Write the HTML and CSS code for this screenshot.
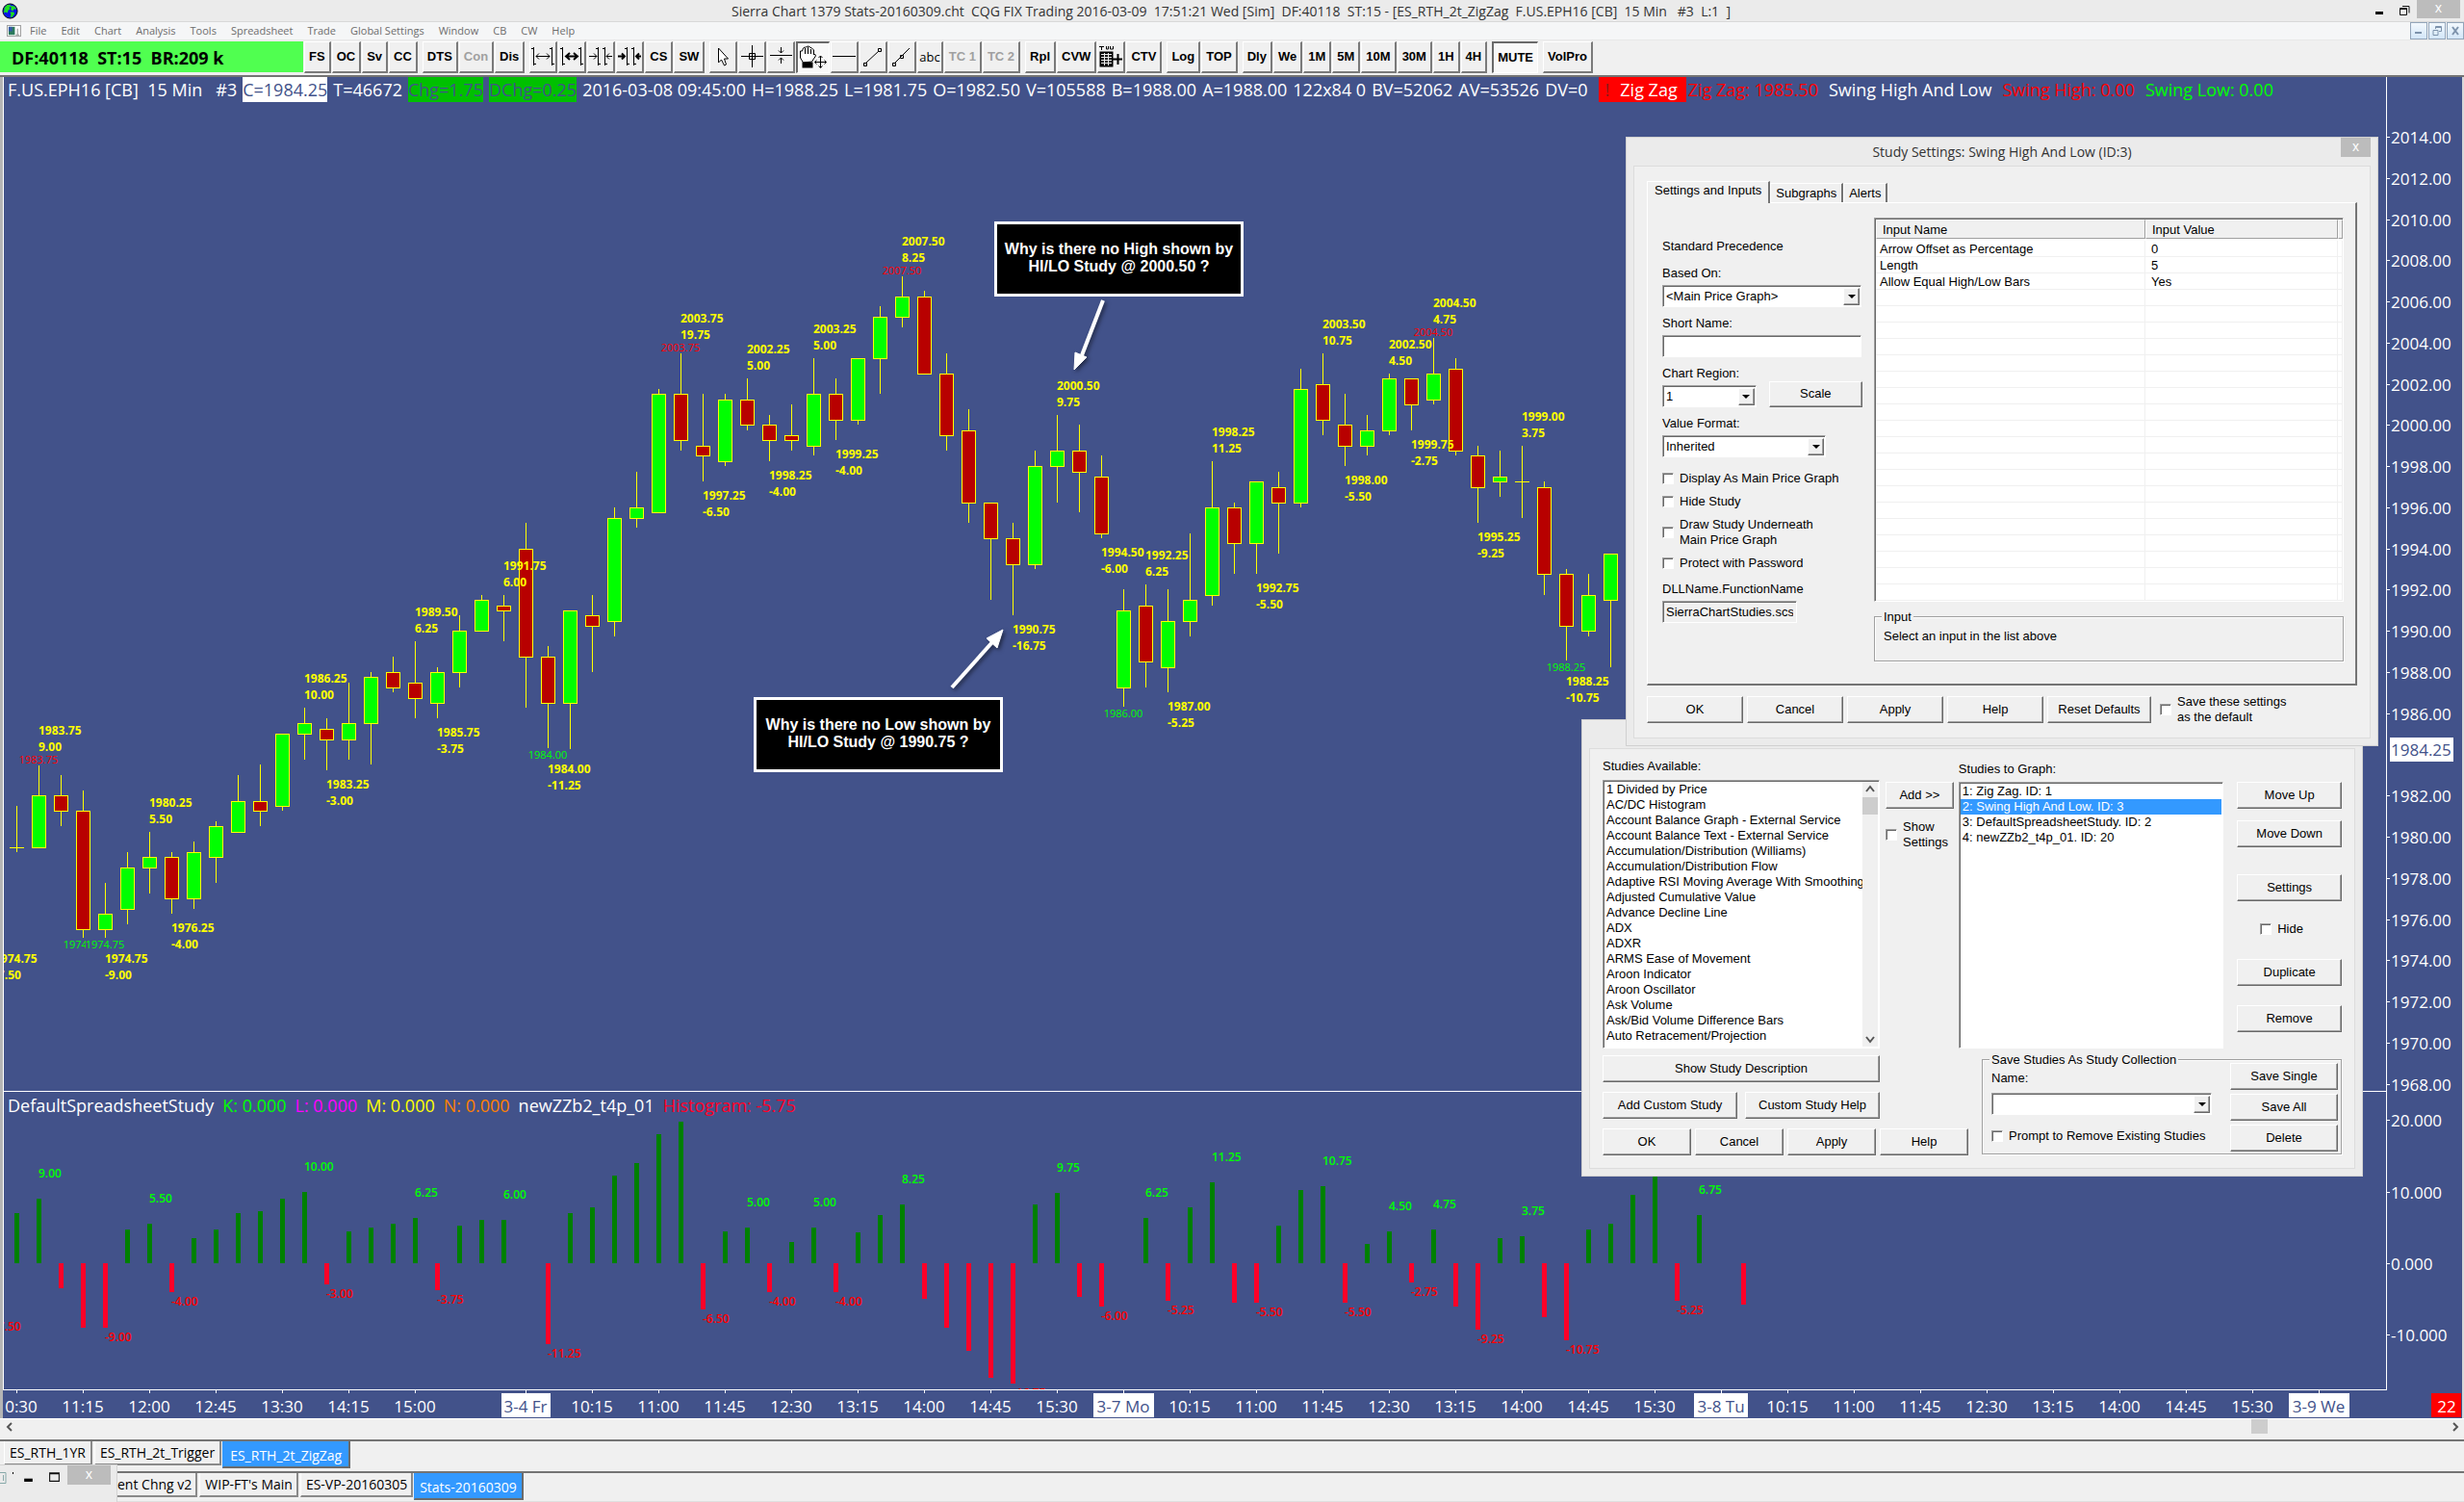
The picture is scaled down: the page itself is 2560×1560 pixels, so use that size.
FILE: index.html
```html
<!DOCTYPE html>
<html lang="en">
<head>
<meta charset="utf-8">
<title>Sierra Chart 1379 Stats-20160309.cht</title>
<link rel="stylesheet" href="styles.css">
</head>
<body>
<header class="titlebar">
  <svg class="globe" viewBox="0 0 18 18" aria-hidden="true"><circle cx="9" cy="9" r="8" fill="#0a14e6" stroke="#000" stroke-width="1"/><path d="M3 5l3-3 3 0 1 2-2 1 1 2-2 1-1 3-2-1-2 1zM10 3l4 1 2 3-3 0-1 2-2-1zM9 10l4 0 1 2-3 4-2-1 1-2z" fill="#1ee01e"/></svg>
  <h1 class="app-title">Sierra Chart 1379 Stats-20160309.cht  CQG FIX Trading 2016-03-09  17:51:21 Wed [Sim]  DF:40118  ST:15 - [ES_RTH_2t_ZigZag  F.US.EPH16 [CB]  15 Min   #3  L:1  ]</h1>
  <div class="window-buttons">
    <button type="button" class="caption-btn" aria-label="Minimize"><svg viewBox="0 0 12 12"><rect x="2" y="8" width="8" height="3"/></svg></button>
    <button type="button" class="caption-btn" aria-label="Restore"><svg viewBox="0 0 12 12"><path d="M1.500 4.500h7v7h-7zM1 5.500h8M4 2.500h7v7" fill="none" stroke="#111"/></svg></button>
    <button type="button" class="close-btn" aria-label="Close">x</button>
  </div>
</header>

<nav class="menubar">
  <svg class="doc-icon" viewBox="0 0 16 14" aria-hidden="true"><rect x=".5" y=".5" width="15" height="12" fill="#fff" stroke="#9a9a9a"/><rect x="2" y="2" width="7" height="9" fill="#2c7a5c"/><rect x="2" y="2" width="4" height="5" fill="#3558a8"/><path d="M10 11h4M12 4v7" stroke="#888"/></svg>
  <button type="button">File</button><button type="button">Edit</button><button type="button">Chart</button><button type="button">Analysis</button><button type="button">Tools</button><button type="button">Spreadsheet</button><button type="button">Trade</button><button type="button">Global Settings</button><button type="button">Window</button><button type="button">CB</button><button type="button">CW</button><button type="button">Help</button>
  <div class="mdi-buttons">
    <button type="button" aria-label="Minimize chart"><svg viewBox="0 0 12 12"><rect x="2" y="7" width="7" height="2" fill="#7d93ac"/></svg></button>
    <button type="button" aria-label="Restore chart"><svg viewBox="0 0 12 12"><path d="M2 5.500h5v5h-5zM4.500 4V1.500h6v5H8M4 2.500h6" fill="none" stroke="#7d93ac"/></svg></button>
    <button type="button" aria-label="Close chart"><svg viewBox="0 0 12 12"><path d="M3 2l6 8M9 2l-6 8" stroke="#7d93ac" stroke-width="2"/></svg></button>
  </div>
</nav>

<div class="toolbar">
  <output class="status">DF:40118  ST:15  BR:209 k</output>
  <div class="group"><button type="button">FS</button><button type="button">OC</button><button type="button">Sv</button><button type="button">CC</button></div>
  <div class="group"><button type="button">DTS</button><button type="button" disabled>Con</button><button type="button">Dis</button></div>
  <div class="group">
    <button type="button" class="ico" aria-label="Increase bar spacing"><svg viewBox="0 0 26 26"><path d="M3.500 3v19M1 4.500h2M4 20.500h2M22.500 3v19M20 4.500h2M23 20.500h2M6 12.500h14M9 9.500l-3 3 3 3M17 9.500l3 3-3 3"/></svg></button>
    <button type="button" class="ico" aria-label="Increase spacing faster"><svg viewBox="0 0 26 26"><path d="M3.500 3v19M1 4.500h2M4 20.500h2M22.500 3v19M20 4.500h2M23 20.500h2"/><path d="M7 12.500h12M11 9l-4 3.500 4 3.500M15 9l4 3.500-4 3.500" stroke-width="2"/></svg></button>
    <button type="button" class="ico" aria-label="Decrease bar spacing"><svg viewBox="0 0 26 26"><path d="M10.500 3v19M8 4.500h2M11 20.500h2M17.500 3v19M15 4.500h2M18 20.500h2M1 12.500h8M6 9.500l3 3-3 3M25 12.500h-6M22 9.500l-3 3 3 3"/></svg></button>
    <button type="button" class="ico" aria-label="Decrease spacing faster"><svg viewBox="0 0 26 26"><path d="M10.500 3v19M8 4.500h2M11 20.500h2M17.500 3v19M15 4.500h2M18 20.500h2"/><path d="M1 12.500h7M5 9.500l3 3-3 3M25 12.500h-5M23 9.500l-3 3 3 3" stroke-width="2"/></svg></button>
    <button type="button">CS</button><button type="button">SW</button>
  </div>
  <div class="group">
    <button type="button" class="ico" aria-label="Pointer"><svg viewBox="0 0 26 26"><path d="M8.500 4v15l3-3 3 6 2-1-2-6h4z" fill="#fff"/></svg></button>
    <button type="button" class="ico" aria-label="Crosshair"><svg viewBox="0 0 26 26"><path d="M13.500 1v23M2 12.500h23M10.500 9.500h6v6h-6z"/></svg></button>
    <button type="button" class="ico" aria-label="Vertical scale"><svg viewBox="0 0 26 26"><path d="M2 11.500h23M13.500 3v6M11 6.500l2.500 2.500 2.500-2.500M13.500 20v-6M11 16.500l2.500-2.500 2.500 2.500"/></svg></button>
    <button type="button" class="ico wide pressed" aria-label="Hand"><svg viewBox="0 0 30 26"><path d="M5.500 18l-3-5 0-7 2 0 1-3 2-1 1 0 2-1 2 1 2 1 2 2v5l1-1 1 2-4 6z" fill="#fff"/><path d="M7.500 9V3M10.500 9V2M13.500 9V4"/><rect x="5" y="18" width="10" height="5" fill="#000"/><path d="M23.500 11v12M17.500 17.500h12M21.500 13l2-2 2 2M21.500 21.500l2 2 2-2M19.500 15.500l-2 2 2 2M27.500 15.500l2 2-2 2"/></svg></button>
    <button type="button" class="ico" aria-label="Horizontal line"><svg viewBox="0 0 26 26"><path d="M1 12.500h24"/></svg></button>
    <button type="button" class="ico" aria-label="Line"><svg viewBox="0 0 26 26"><path d="M6 19L19 7M3.500 19.500h3v3h-3zM18.500 4.500h3v3h-3z"/></svg></button>
    <button type="button" class="ico" aria-label="Ray"><svg viewBox="0 0 26 26"><path d="M6 19L21 4M3.500 19.500h3v3h-3zM11.500 11.500h3v3h-3z"/></svg></button>
    <button type="button" class="plain">abc</button><button type="button" disabled>TC 1</button><button type="button" disabled>TC 2</button>
  </div>
  <div class="group"><button type="button">Rpl</button><button type="button">CVW</button><button type="button" class="ico" aria-label="Trade window"><svg viewBox="0 0 26 26"><path d="M1 2.500h5M3.500 2v4M8.500 2v3l2 0 0-3M12.500 2v3h3v-3"/><rect x="2" y="8" width="13" height="15" fill="#000"/><path d="M3 10.500h11M3 13.500h11M3 16.500h11M3 19.500h11M6.500 9v13M10.500 9v13" stroke="#eee"/><path d="M14 15.500h11M20.500 10v11" stroke-width="2"/></svg></button><button type="button">CTV</button></div>
  <div class="group"><button type="button">Log</button><button type="button">TOP</button></div>
  <div class="group"><button type="button">Dly</button><button type="button">We</button><button type="button">1M</button><button type="button">5M</button><button type="button">10M</button><button type="button">30M</button><button type="button">1H</button><button type="button">4H</button></div>
  <div class="group"><button type="button" class="pressed">MUTE</button></div>
  <div class="group"><button type="button">VolPro</button></div>
</div>

<main class="workspace">
  <svg class="chart" id="chart" role="img" aria-label="F.US.EPH16 15 minute candlestick chart"></svg>

  <div class="legend">
    <span>F.US.EPH16 [CB]  15 Min   #3</span>
    <span class="last">C=1984.25</span>
    <span>T=46672</span>
    <span class="change">Chg=1.75</span>
    <span class="change">DChg=0.25</span>
    <span>2016-03-08 09:45:00</span>
    <span>H=1988.25</span>
    <span>L=1981.75</span>
    <span>O=1982.50</span>
    <span>V=105588</span>
    <span>B=1988.00</span>
    <span>A=1988.00</span>
    <span>122x84 0</span>
    <span>BV=52062</span>
    <span>AV=53526</span>
    <span>DV=0</span>
    <span class="alert"><i>!</i>Zig Zag</span>
    <span class="red after-alert">Zig Zag: 1985.50</span>
    <span class="study">Swing High And Low</span>
    <span class="red study">Swing High: 0.00</span>
    <span class="green study">Swing Low: 0.00</span>
  </div>

  <div class="legend lower" id="studyLegend">
    <span>DefaultSpreadsheetStudy</span>
    <span class="green study">K: 0.000</span>
    <span class="magenta study">L: 0.000</span>
    <span class="yellow study">M: 0.000</span>
    <span class="orange study">N: 0.000</span>
    <span class="study">newZZb2_t4p_01</span>
    <span class="crimson study">Histogram: -5.75</span>
  </div>

  <p class="note note-high">Why is there no High shown by<br>HI/LO Study @ 2000.50 ?</p>
  <p class="note note-low">Why is there no Low shown by<br>HI/LO Study @ 1990.75 ?</p>

  <section class="dialog studies" aria-label="Chart Studies">
    <div class="dialog-title"></div>
    <form class="dialog-body studies-body">
      <div class="studies-top">
        <div class="available">
          <span class="text" id="availLabel">Studies Available:</span>
          <div class="listbox">
            <ul role="listbox" aria-labelledby="availLabel">
              <li>1 Divided by Price</li><li>AC/DC Histogram</li><li>Account Balance Graph - External Service</li><li>Account Balance Text - External Service</li><li>Accumulation/Distribution (Williams)</li><li>Accumulation/Distribution Flow</li><li>Adaptive RSI Moving Average With Smoothing</li><li>Adjusted Cumulative Value</li><li>Advance Decline Line</li><li>ADX</li><li>ADXR</li><li>ARMS Ease of Movement</li><li>Aroon Indicator</li><li>Aroon Oscillator</li><li>Ask Volume</li><li>Ask/Bid Volume Difference Bars</li><li>Auto Retracement/Projection</li><li>Awesome Oscillator</li>
            </ul>
            <div class="vscroll">
              <svg viewBox="0 0 16 16"><path d="M4 10l4-5 4 5"/></svg>
              <span class="thumb"></span>
              <svg class="down" viewBox="0 0 16 16"><path d="M4 6l4 5 4-5"/></svg>
            </div>
          </div>
        </div>
        <div class="add-col">
          <button type="button" class="btn">Add &gt;&gt;</button>
          <label class="check"><input type="checkbox"><span>Show<br>Settings</span></label>
        </div>
        <div class="graphed">
          <span class="text" id="graphLabel">Studies to Graph:</span>
          <div class="listbox">
            <ul role="listbox" aria-labelledby="graphLabel">
              <li>1: Zig Zag. ID: 1</li><li class="selected" aria-selected="true">2: Swing High And Low. ID: 3</li><li>3: DefaultSpreadsheetStudy. ID: 2</li><li>4: newZZb2_t4p_01. ID: 20</li>
            </ul>
          </div>
        </div>
        <div class="actions">
          <button type="button" class="btn">Move Up</button>
          <button type="button" class="btn">Move Down</button>
          <button type="button" class="btn spaced">Settings</button>
          <label class="check hide"><input type="checkbox"><span>Hide</span></label>
          <button type="button" class="btn">Duplicate</button>
          <button type="button" class="btn remove">Remove</button>
        </div>
      </div>
      <div class="studies-bottom">
        <div class="left-buttons">
          <div class="btn-row wide"><button type="button" class="btn">Show Study Description</button></div>
          <div class="btn-row wide"><button type="button" class="btn">Add Custom Study</button><button type="button" class="btn">Custom Study Help</button></div>
          <div class="btn-row small"><button type="button" class="btn">OK</button><button type="button" class="btn">Cancel</button><button type="button" class="btn">Apply</button><button type="button" class="btn">Help</button></div>
        </div>
        <fieldset class="groupbox collection">
          <legend>Save Studies As Study Collection</legend>
          <div class="collection-form">
            <label class="text" for="collName">Name:</label>
            <span class="combo"><select id="collName"><option></option></select><span class="combo-arrow"></span></span>
            <label class="check"><input type="checkbox"><span>Prompt to Remove Existing Studies</span></label>
          </div>
          <div class="collection-buttons">
            <button type="button" class="btn">Save Single</button><button type="button" class="btn">Save All</button><button type="button" class="btn">Delete</button>
          </div>
        </fieldset>
      </div>
    </form>
  </section>

  <section class="dialog settings" aria-labelledby="settingsTitle">
    <div class="dialog-title"><h2 id="settingsTitle">Study Settings: Swing High And Low (ID:3)</h2><button type="button" class="close-btn" aria-label="Close dialog">x</button></div>
    <form class="dialog-body">
      <div class="tabs" role="tablist"><button type="button" role="tab" class="active" aria-selected="true">Settings and Inputs</button><button type="button" role="tab">Subgraphs</button><button type="button" role="tab">Alerts</button></div>
      <div class="tab-panel">
        <div class="fields">
          <span class="text precedence">Standard Precedence</span>
          <label class="text" for="basedOn">Based On:</label>
          <span class="combo"><select id="basedOn"><option>&lt;Main Price Graph&gt;</option></select><span class="combo-arrow"></span></span>
          <label class="text" for="shortName">Short Name:</label>
          <input type="text" class="edit" id="shortName">
          <label class="text" for="region">Chart Region:</label>
          <div class="region-row"><span class="combo"><select id="region"><option>1</option></select><span class="combo-arrow"></span></span><button type="button" class="btn">Scale</button></div>
          <label class="text" for="format">Value Format:</label>
          <span class="combo format"><select id="format"><option>Inherited</option></select><span class="combo-arrow"></span></span>
          <div class="checks">
            <label class="check"><input type="checkbox"><span>Display As Main Price Graph</span></label>
            <label class="check"><input type="checkbox"><span>Hide Study</span></label>
            <label class="check"><input type="checkbox"><span>Draw Study Underneath<br>Main Price Graph</span></label>
            <label class="check"><input type="checkbox"><span>Protect with Password</span></label>
          </div>
          <label class="text dll" for="dll">DLLName.FunctionName</label>
          <input type="text" class="edit readonly" id="dll" value="SierraChartStudies.scsf_SwingHighAndLow" readonly>
        </div>
        <div class="inputs">
          <div class="grid-box">
            <table class="input-grid">
              <colgroup><col class="c-name"><col class="c-value"><col class="c-rest"></colgroup>
              <thead><tr><th>Input Name</th><th>Input Value</th><th></th></tr></thead>
              <tbody id="inputRows">
                <tr><td>Arrow Offset as Percentage</td><td>0</td><td></td></tr>
                <tr><td>Length</td><td>5</td><td></td></tr>
                <tr><td>Allow Equal High/Low Bars</td><td>Yes</td><td></td></tr>
              </tbody>
            </table>
          </div>
          <fieldset class="groupbox hint"><legend>Input</legend><p>Select an input in the list above</p></fieldset>
        </div>
      </div>
      <div class="btn-row dialog-buttons">
        <button type="button" class="btn">OK</button><button type="button" class="btn">Cancel</button><button type="button" class="btn">Apply</button><button type="button" class="btn">Help</button><button type="button" class="btn reset">Reset Defaults</button>
        <label class="check"><input type="checkbox"><span>Save these settings<br>as the default</span></label>
      </div>
    </form>
  </section>
</main>

<div class="hscroll">
  <svg viewBox="0 0 8 12"><path d="M6 2L2 6l4 4"/></svg>
  <span class="thumb"></span>
  <svg viewBox="0 0 8 12"><path d="M2 2l4 4-4 4"/></svg>
</div>
<nav class="sheet-tabs charts" aria-label="Charts"><button type="button">ES_RTH_1YR</button><button type="button">ES_RTH_2t_Trigger</button><button type="button" class="active">ES_RTH_2t_ZigZag</button></nav>
<nav class="sheet-tabs books" aria-label="Chartbooks"><button type="button">ent Chng v2</button><button type="button">WIP-FT's Main</button><button type="button">ES-VP-20160305</button><button type="button" class="active">Stats-20160309</button>
  <div class="mini-window">
    <svg class="mini-icon" viewBox="0 0 16 14" aria-hidden="true"><path d="M0 1.500h6v11H0M3.500 4v6" fill="none" stroke="#8aa"/><rect x="13" y="1" width="1" height="2"/></svg>
    <button type="button" class="caption-btn" aria-label="Minimize window"><svg viewBox="0 0 12 12"><rect x="2" y="8" width="8" height="3"/></svg></button>
    <button type="button" class="caption-btn" aria-label="Maximize window"><svg viewBox="0 0 12 12"><path d="M1.500 2v8.500h9V2M1 2.500h10M1 3.500h10" fill="none" stroke="#111"/></svg></button>
    <button type="button" class="close-btn" aria-label="Close window">x</button>
  </div>
</nav>
<script src="chart.js"></script>
</body>
</html>
```
FILE: styles.css
```css
* { box-sizing: border-box; }
:root {
  --ui: "Open Sans", "Noto Sans", sans-serif;
  --dlg: "Liberation Sans", Arial, sans-serif;
  --chart: #42528a;
  --face: #f0f0f0;
  --blue: #3399ff;
}
body {
  margin: 0;
  min-height: 100vh;
  display: flex;
  flex-direction: column;
  background: var(--face);
  font-family: var(--ui);
  color: #000;
  overflow: hidden;
}
h1, h2, p, ul, fieldset { margin: 0; padding: 0; }
button, input, select { font: inherit; color: inherit; margin: 0; }
svg { display: block; }

/* title bar and menu */
.titlebar {
  height: 23px;
  display: grid;
  grid-template-columns: 1fr auto 1fr;
  align-items: center;
  background: #ebebeb;
  border-bottom: 1px solid #d8d8d8;
  padding: 0 4px 0 2px;
}
.globe { width: 17px; height: 17px; }
.app-title {
  font-size: 14px;
  font-weight: 400;
  color: #333;
  white-space: pre;
}
.window-buttons { display: flex; align-self: start; justify-self: end; }
.caption-btn {
  width: 26px;
  height: 19px;
  padding: 3px 7px;
  border: 0;
  background: none;
}
.close-btn {
  width: 45px;
  height: 19px;
  padding: 0 0 3px;
  border: 0;
  background: #bcbcbc;
  color: #fff;
  font-size: 14px;
  line-height: 16px;
}
.menubar {
  height: 19px;
  display: flex;
  align-items: center;
  gap: 15px;
  padding-left: 7px;
  background: #f5f6f7;
  border-bottom: 1px solid #e8e8e8;
}
.menubar button {
  border: 0;
  padding: 0;
  background: none;
  color: #6d6d6d;
  font-size: 11px;
  line-height: 16px;
}
.doc-icon { width: 15px; height: 13px; margin-right: -6px; }
.mdi-buttons { display: flex; gap: 1px; margin-left: auto; }
.menubar .mdi-buttons button {
  width: 18px;
  height: 18px;
  padding: 2px;
  border: 1px solid #93a5ba;
  background: linear-gradient(#f2f8fd, #d3e6f8);
}

/* toolbar */
.toolbar {
  height: 38px;
  display: flex;
  align-items: flex-start;
  gap: 5px;
  padding-top: 1px;
  border-bottom: 2px solid #747474;
  background: var(--face);
}
.status {
  width: 315px;
  height: 32px;
  margin-right: -4px;
  padding-left: 12px;
  background: #50ff50;
  font-size: 18px;
  font-weight: 700;
  line-height: 34px;
  white-space: pre;
}
.group { display: flex; gap: 1px; }
.toolbar button {
  height: 33px;
  padding: 0 4px;
  border: solid;
  border-width: 1px 2px 2px 1px;
  border-color: #fff #7a7a7a #7a7a7a #fff;
  background: var(--face);
  font: 700 13px/28px var(--dlg);
}
.toolbar button:disabled { color: #a0a0a0; }
.toolbar .plain { font: 400 13px/28px var(--ui); padding: 0 1px; }
.toolbar .pressed {
  border-width: 2px 1px 1px 2px;
  border-color: #696969 #fff #fff #696969;
  background: #f8f8f8;
}
.toolbar .ico { width: 29px; padding: 0; }
.toolbar .wide { width: 35px; }
.ico svg { width: 26px; height: 26px; fill: none; stroke: #000; }
.wide svg { width: 30px; }

/* chart */
.workspace {
  flex: 1;
  position: relative;
  background: var(--chart);
  border-left: 3px solid #b5b5b5;
  overflow: hidden;
}
.chart { position: absolute; inset: 0; width: 100%; height: 100%; }
.chart text { font-family: var(--ui); }
.chart .axis-text { font-size: 17px; fill: #fff; }
.chart .day-text { font-size: 17px; fill: var(--chart); }
.chart .swing { font-size: 12px; font-weight: 700; fill: #ff0; }
.chart .bar-up { font-size: 12px; font-weight: 600; fill: #0f0; }
.chart .bar-down { font-size: 12px; font-weight: 600; fill: #f00; }
.chart .mark-high { font-size: 11px; fill: #f00; }
.chart .mark-low { font-size: 11px; fill: #0f0; }
.legend {
  position: absolute;
  top: 0;
  left: 5px;
  display: flex;
  color: #fff;
  font-size: 18px;
  line-height: 26px;
  white-space: pre;
  gap: 6px;
}
.legend.lower { gap: 4px; }
.legend .last { background: #fff; color: var(--chart); }
.legend .change { background: #00c000; color: var(--chart); }
.legend .alert { background: #f00; padding: 0 9px 0 7px; margin-left: 5px; }
.legend .alert i { font-style: normal; color: #8a1a1a; margin-right: 11px; }
.legend .after-alert { margin-left: -4px; }
.legend .study { margin-left: 5px; }
.red { color: #f00; }
.green { color: #0f0; }
.magenta { color: #f0f; }
.yellow { color: #ff0; }
.orange { color: #ff8000; }
.crimson { color: #ff0028; }

.note {
  position: absolute;
  width: 259px;
  padding: 17px 0 19px;
  border: 3px solid #fff;
  background: #000;
  color: #fff;
  text-align: center;
  font: 700 16px/18px var(--dlg);
  white-space: nowrap;
}
.note-high { left: 1030px; top: 150px; }
.note-low { left: 780px; top: 644px; }

/* dialogs */
.dialog {
  position: absolute;
  padding: 0 7px 7px;
  border: 1px solid #d0d0d0;
  background: #ebebeb;
  font: 13px/16px var(--dlg);
}
.settings { top: 62px; right: 89px; width: 782px; }
.studies { top: 667px; right: 105px; width: 812px; }
.dialog-title { height: 29px; position: relative; }
.dialog-title h2 {
  font: 400 14px/30px var(--ui);
  color: #333;
  text-align: center;
}
.dialog-title .close-btn {
  position: absolute;
  top: 0;
  right: 0;
  width: 31px;
  height: 20px;
}
.dialog-body {
  padding: 15px 13px 13px;
  border: 1px solid #dcdcdc;
  background: var(--face);
}
.text { display: block; }
.btn {
  height: 28px;
  padding: 0 0 1px;
  border: 1px solid;
  border-color: #fff #696969 #696969 #fff;
  box-shadow: inset -1px -1px #a0a0a0;
  background: var(--face);
}
.btn-row { display: flex; }
.check { display: flex; align-items: center; gap: 6px; }
.check input {
  appearance: none;
  width: 12px;
  height: 12px;
  border: 1px solid;
  border-color: #a0a0a0 #fff #fff #a0a0a0;
  box-shadow: inset 1px 1px #696969;
  background: #fff;
}
.edit, .combo {
  height: 23px;
  border: 1px solid;
  border-color: #a0a0a0 #fff #fff #a0a0a0;
  box-shadow: inset 1px 1px #696969;
  background: #fff;
}
.edit { width: 207px; padding: 0 3px; }
.edit.readonly { width: 140px; background: var(--face); }
.combo { display: flex; padding: 2px 1px 1px 2px; width: 207px; }
.combo select {
  flex: 1;
  min-width: 0;
  appearance: none;
  border: 0;
  padding: 0 1px;
  background: none;
}
.combo-arrow {
  width: 17px;
  border: 1px solid;
  border-color: #fff #696969 #696969 #fff;
  box-shadow: inset -1px -1px #a0a0a0;
  background: var(--face);
  display: grid;
  place-items: center;
}
.combo-arrow::after {
  content: "";
  border: solid transparent;
  border-width: 4px 4px 0;
  border-top-color: #000;
}
.groupbox {
  position: relative;
  min-width: 0;
  border: 1px solid #a0a0a0;
  box-shadow: inset 1px 1px #fff, 1px 1px #fff;
}
.groupbox legend {
  position: absolute;
  top: -8px;
  left: 7px;
  padding: 0 2px;
  background: var(--face);
}

.tabs { display: flex; align-items: flex-end; height: 22px; }
.tabs button {
  height: 20px;
  padding: 0 5px;
  border: solid;
  border-width: 1px 2px 0 1px;
  border-color: #fff #747474 #fff #fff;
  background: var(--face);
}
.tabs .active { height: 23px; padding: 0 7px 4px; margin-bottom: -1px; position: relative; }
.tab-panel {
  display: flex;
  justify-content: space-between;
  padding: 15px 12px 23px 15px;
  border: solid;
  border-width: 1px 2px 2px 1px;
  border-color: #fff #747474 #747474 #fff;
}
.fields { width: 208px; }
.fields .precedence { margin: 22px 0 12px; }
.fields .combo, .fields .edit { margin: 4px 0 9px; }
.region-row { display: flex; gap: 13px; }
.region-row .combo { width: 98px; }
.region-row .btn { width: 98px; height: 27px; }
.fields .combo.format { width: 170px; }
.region-row { height: 36px; }
.checks { display: flex; flex-direction: column; gap: 8px; margin: 14px 0 11px; }
.inputs { width: 488px; }
.grid-box {
  height: 399px;
  border: 1px solid;
  border-color: #a0a0a0 #fff #fff #a0a0a0;
  box-shadow: inset 1px 1px #696969;
  padding: 1px 0 0 1px;
  background: #fff;
  overflow: hidden;
}
.input-grid { width: 100%; border-collapse: separate; border-spacing: 0; table-layout: fixed; }
.c-name { width: 280px; }
.c-value { width: 200px; }
.input-grid th {
  height: 20px;
  padding: 0 0 0 6px;
  border: 1px solid;
  border-color: #fff #a0a0a0 #a0a0a0 #fff;
  background: var(--face);
  font-weight: 400;
  text-align: left;
}
.input-grid th, .input-grid td { line-height: 15px; }
.input-grid td {
  height: 17px;
  padding: 1px 0 0 4px;
  border: solid #f0f0f0;
  border-width: 0 1px 1px 0;
}
.input-grid td + td { padding-left: 6px; }
.input-grid tbody::before { content: ""; display: block; height: 2px; }
.hint { height: 47px; margin-top: 15px; padding: 12px 9px; }
.dialog-buttons { margin-top: 11px; gap: 4px; }
.dialog-buttons .btn { width: 100px; }
.dialog-buttons .reset { width: 108px; }
.dialog-buttons .check { margin: -2px 0 0 5px; }

.studies-body { padding: 10px 13px 13px 13px; }
.studies-top { display: flex; align-items: flex-start; }
.available { width: 288px; }
.available .listbox { height: 279px; margin-top: 6px; }
.listbox {
  display: flex;
  border: 1px solid;
  border-color: #a0a0a0 #fff #fff #a0a0a0;
  box-shadow: inset 1px 1px #696969;
  background: #fff;
  padding: 1px;
  overflow: hidden;
}
.listbox ul { flex: 1; min-width: 0; list-style: none; overflow: hidden; }
.listbox li { padding-left: 2px; white-space: nowrap; overflow: hidden; }
.listbox .selected { background: var(--blue); color: #fff; }
.vscroll { width: 16px; display: flex; flex-direction: column; background: var(--face); }
.vscroll svg { width: 16px; height: 16px; fill: none; stroke: #555; stroke-width: 2; }
.vscroll .thumb { height: 18px; background: #cdcdcd; }
.vscroll .down { margin-top: auto; }
.add-col { width: 71px; margin: 24px 5px 0 6px; }
.add-col .btn { width: 100%; margin-bottom: 11px; }
.graphed { width: 276px; padding-top: 3px; }
.graphed .listbox { height: 277px; margin-top: 5px; }
.actions { display: flex; flex-direction: column; margin: 24px 0 0 14px; width: 109px; gap: 12px; }
.actions .spaced { margin-top: 16px; }
.actions .hide { margin: 9px 0 11px 24px; }
.actions .remove { margin-top: 8px; }
.studies-bottom { display: flex; justify-content: space-between; margin-top: 7px; }
.left-buttons { display: flex; flex-direction: column; gap: 10px; }
.btn-row.wide { gap: 8px; width: 288px; }
.btn-row.wide .btn { flex: 1; }
.btn-row.small { gap: 4px; }
.btn-row.small .btn { width: 92px; }
.collection { display: flex; width: 374px; height: 99px; margin-top: 4px; padding: 3px 3px 0 9px; justify-content: space-between; }
.collection-form { padding-top: 8px; }
.collection-form .combo { width: 229px; margin: 7px 0 14px; }
.collection-buttons { display: flex; flex-direction: column; gap: 4px; width: 112px; }

/* bottom strips */
.hscroll {
  height: 24px;
  display: flex;
  align-items: flex-start;
  padding: 2px 5px 0 6px;
  border-top: 1px solid #fff;
  border-bottom: 2px solid #747474;
}
.hscroll svg { width: 8px; height: 12px; fill: none; stroke: #555; stroke-width: 2; }
.hscroll svg:first-child { margin-right: auto; }
.hscroll .thumb { width: 17px; height: 15px; margin: -2px 191px 0 0; background: #cdcdcd; }
.sheet-tabs { display: flex; align-items: flex-start; gap: 2px; height: 33px; padding-left: 4px; border-bottom: 2px solid #747474; }
.sheet-tabs button {
  height: 25px;
  padding: 0 4px 0 5px;
  border: solid;
  border-width: 0 2px 2px 1px;
  border-color: #fff #8a8a8a #8a8a8a #fff;
  background: var(--face);
  font-size: 14px;
  line-height: 23px;
}
.sheet-tabs.charts button { padding: 0 5px; }
.sheet-tabs .active { height: 28px; margin-left: -1px; padding: 2px 5px 0; border-color: var(--blue) #6b6b6b #6b6b6b var(--blue); background: var(--blue); color: #fff; }
.sheet-tabs.charts .active { padding: 2px 7px 0; }
.sheet-tabs.books { position: relative; height: 30px; padding-left: 116px; border-bottom: 1px solid #e0e0e0; }
.mini-window {
  position: absolute;
  left: 0;
  bottom: -1px;
  width: 122px;
  height: 39px;
  display: flex;
  border: solid #d4d4d4;
  border-width: 1px 1px 0 0;
  background: #ebebeb;
}
.mini-icon { width: 16px; height: 14px; margin-top: 6px; }
.sheet-tabs .mini-window .caption-btn { width: 27px; height: 22px; padding: 5px 7px; border: 0; background: none; }
.sheet-tabs .mini-window .close-btn { width: 45px; height: 20px; border: 0; background: #bcbcbc; line-height: 16px; padding: 0 0 2px; }
```
FILE: chart.js
```js
// Fifteen-minute bars: [high, open, close, low]
const bars = [
  [1981.5,1979.5,1979.5,1979.25],[1983.75,1979.5,1982,1979.5],[1983,1982,1981.25,1980.5],[1982.25,1981.25,1975.5,1974.75],
  [1977.75,1975.5,1976.25,1974.75],[1979.25,1976.5,1978.5,1975.75],[1980.25,1978.5,1979,1977.25],[1979.25,1979,1977,1976.25],
  [1979.75,1977,1979.25,1976.5],[1980.75,1979,1980.5,1977.75],[1983,1980.25,1981.75,1980.25],[1983.5,1981.75,1981.25,1980.5],
  [1985,1981.5,1985,1981.25],[1986.25,1985,1985.5,1983.75],[1985.75,1985.25,1984.75,1983.25],[1987.5,1984.75,1985.5,1983.75],
  [1988,1985.5,1987.75,1983.5],[1988.75,1988,1987.25,1987],[1989.5,1987.5,1986.75,1985.75],[1988.25,1986.5,1988,1985.75],
  [1990.75,1988,1990,1987.25],[1991.75,1990,1991.5,1990],[1991.75,1991.25,1991,1989.5],[1995.25,1994,1988.75,1986.25],
  [1989.25,1988.75,1986.5,1984],[1991,1986.5,1991,1984.25],[1991.75,1990.75,1990.25,1988],[1996,1990.5,1995.5,1989.75],
  [1997.75,1995.5,1996,1995],[2001.75,1995.75,2001.5,1995.75],[2003.75,2001.5,1999.25,1998.75],[2001.5,1999,1998.5,1997.25],
  [2001.5,1998.25,2001.25,1998],[2002.25,2001.25,2000,1999.75],[2000.5,2000,1999.25,1998.25],[2001,1999.5,1999.25,1998.75],
  [2003.25,1999,2001.5,1998.5],[2002.25,2001.5,2000.25,1999.25],[2003.25,2000.25,2003.25,2000],[2005.75,2003.25,2005.25,2001.5],
  [2007.5,2005.25,2006.25,2004.75],[2006.5,2006.25,2002.5,2002.5],[2003.5,2002.5,1999.5,1998.75],[2000.75,1999.75,1996.25,1995.25],
  [1996.25,1996.25,1994.5,1991.5],[1995.25,1994.5,1993.25,1990.75],[1998.75,1993.25,1998,1993],[2000.5,1998,1998.75,1996.25],
  [2000,1998.75,1997.75,1995.75],[1998.5,1997.5,1994.75,1994.5],[1992,1987.25,1991,1986],[1992.25,1991.25,1988.5,1987.25],
  [1992,1988.25,1990.5,1987],[1994.75,1990.5,1991.5,1989.75],[1998.25,1991.75,1996,1991.25],[1996.25,1996,1994.25,1992.75],
  [1997.25,1994.25,1997.25,1992.75],[1997.75,1997,1996.25,1993.75],[2002.75,1996.25,2001.75,1996],[2003.5,2002,2000.25,1999.5],
  [2001.5,2000,1999,1998],[2000.5,1999,1999.75,1998.5],[2002.5,1999.75,2002.25,1999.5],[2002.25,2002.25,2001,1999.75],
  [2004.5,2001.25,2002.5,2001],[2003.25,2002.75,1998.75,1998.5],[1999,1998.5,1997,1995.25],[1998.75,1997.25,1997.5,1996.5],
  [1999,1997.25,1997.25,1995.5],[1997.25,1997,1992.75,1991.75],[1993,1992.75,1990.25,1988.25],[1992.75,1990,1991.75,1989.75],
  [1993.75,1991.5,1993.75,1988.25]
];

// Zig zag turning points: bar index -> [price, swing length]
const swings = [
  [-1,1974.75,-7.5],[1,1983.75,9],[4,1974.75,-9],[6,1980.25,5.5],[7,1976.25,-4],[13,1986.25,10],[14,1983.25,-3],
  [18,1989.5,6.25],[19,1985.75,-3.75],[22,1991.75,6],[24,1984,-11.25],[30,2003.75,19.75],[31,1997.25,-6.5],
  [33,2002.25,5],[34,1998.25,-4],[36,2003.25,5],[37,1999.25,-4],[40,2007.5,8.25],[45,1990.75,-16.75],[47,2000.5,9.75],
  [49,1994.5,-6],[51,1992.25,6.25],[52,1987,-5.25],[54,1998.25,11.25],[56,1992.75,-5.5],[59,2003.5,10.75],
  [60,1998,-5.5],[62,2002.5,4.5],[63,1999.75,-2.75],[64,2004.5,4.75],[66,1995.25,-9.25],[68,1999,3.75],[70,1988.25,-10.75]
];
// Swing High And Low study marks
const highs = [1, 30, 40, 64];
const lows = [3, 4, 24, 50, 70];

const histogram = [
  7,9,-3.5,-9,-9,4.75,5.5,-4,3.5,4.75,7,7.25,9,10,-3,4.5,5,5.5,6.25,-3.75,5.25,6,6,0,-11.25,7,7.75,12.25,14,18,19.75,
  -6.5,4.5,5,-4,3,5,-4,4.25,6.75,8.25,-5,-9,-12.25,-16,-16.75,8.25,9.75,-4.75,-6,0,6.25,-5.25,7.75,11.25,-5.5,-5.5,5.25,
  10.25,10.75,-5.5,2.75,4.5,-2.75,4.75,-6,-9.25,3.5,3.75,-7.5,-10.75,4.75,5.5,9.5,12.5,-5.25,6.75,0,-5.75
];

const svg = document.getElementById("chart");
const NS = "http://www.w3.org/2000/svg";
function add(tag, attrs, text, parent) {
  const el = document.createElementNS(NS, tag);
  for (const k in attrs) el.setAttribute(k, attrs[k]);
  if (text !== undefined) el.textContent = text;
  (parent || svg).appendChild(el);
  return el;
}

function draw() {
  svg.textContent = "";
  const W = svg.clientWidth, H = svg.clientHeight;
  const axisX = W - 81, axisY = H - 30;
  const split = Math.round(axisY * 0.7726);
  document.getElementById("studyLegend").style.top = split + 2 + "px";
  const px = i => 14 + 23 * i;
  const py = p => Math.round((2016.9 - p) * split / 49.24);
  const unit = (axisY - split) / 41.67;
  const hy = v => Math.round(split + (24.06 - v) * unit);
  const rect = (x, y, w, h, fill, parent) => add("rect", { x, y, width: w, height: h, fill }, undefined, parent);

  const clip = add("clipPath", { id: "plot" }, undefined, add("defs", {}));
  rect(1, 0, axisX - 1, axisY, "#000", clip);
  const plot = add("g", { "clip-path": "url(#plot)" });

  bars.forEach(([h, o, c, l], i) => {
    const x = px(i), top = py(Math.max(o, c)), bottom = py(Math.min(o, c));
    rect(x, py(h), 1, py(l) - py(h), "#ff0", plot);
    if (o === c) rect(x - 7, top, 15, 1, "#ff0", plot);
    else add("rect", { x: x - 6.5, y: top + 0.5, width: 14, height: bottom - top, fill: c > o ? "#0f0" : "#b80000", stroke: "#ff0" }, undefined, plot);
  });

  const mark = (i, price, cls) => {
    rect(px(i) - 20, py(price) - 7, 41, 13, "#42528a", plot);
    add("text", { x: px(i), y: py(price) + 4, "text-anchor": "middle", class: cls }, price.toFixed(2), plot);
  };
  highs.forEach(i => mark(i, bars[i][0], "mark-high"));
  lows.forEach(i => mark(i, bars[i][3], "mark-low"));

  swings.forEach(([i, price, size]) => {
    const y = py(price) + (size > 0 ? -26 : 19);
    add("text", { x: px(i), y, class: "swing" }, price.toFixed(2), plot);
    add("text", { x: px(i), y: y + 17, class: "swing" }, size.toFixed(2), plot);
  });

  const zero = hy(0);
  histogram.forEach((v, i) => {
    if (v > 0) rect(px(i) - 2, hy(v), 5, zero - hy(v), "#008000", plot);
    if (v < 0) rect(px(i) - 2, zero, 5, hy(v) - zero, "#ff0028", plot);
  });
  swings.concat([[75, 0, -5.25], [76, 0, 6.75]]).forEach(([i, , v]) => {
    if (v > 12) return;
    add("text", { x: px(i), y: v > 0 ? hy(v) - 22 : hy(v) + 14, class: v > 0 ? "bar-up" : "bar-down" }, v.toFixed(2), plot);
  });

  // frame lines
  rect(0, 0, 1, axisY, "#fff");
  rect(0, split, axisX, 1, "#fff");
  rect(0, axisY, axisX + 1, 1, "#fff");
  rect(axisX, 0, 1, axisY, "#fff");
  rect(W - 2, 0, 2, H, "#d8d8d8");

  const tick = (y, label) => {
    rect(axisX, y, 4, 1, "#fff");
    add("text", { x: axisX + 5, y: y + 7, class: "axis-text" }, label);
  };
  for (let p = 2014; p >= 1968; p -= 2) if (p !== 1984) tick(py(p), p.toFixed(2));
  [20, 10, 0, -10].forEach(v => tick(hy(v), v.toFixed(3)));
  rect(axisX + 4, py(1984.25) - 12, 66, 25, "#fff");
  add("text", { x: axisX + 5, y: py(1984.25) + 7, class: "day-text" }, "1984.25");

  const time = (i, label) => {
    rect(px(i), axisY + 1, 1, 3, "#fff");
    add("text", { x: Math.max(px(i), 19), y: H - 6, "text-anchor": "middle", class: "axis-text" }, label);
  };
  ["0:30", "11:15", "12:00", "12:45", "13:30", "14:15", "15:00"].forEach((t, n) => time(n * 3, t));
  [26, 53, 80].forEach(start =>
    ["10:15", "11:00", "11:45", "12:30", "13:15", "14:00", "14:45", "15:30"].forEach((t, n) => time(start + n * 3, t)));
  [[23, "3-4 Fr", 51], [50, "3-7 Mo", 63], [77, "3-8 Tu", 56], [104, "3-9 We", 63]].forEach(([i, t, w]) => {
    time(i, "");
    rect(px(i) - Math.floor(w / 2), H - 26, w, 25, "#fff");
    add("text", { x: px(i), y: H - 6, "text-anchor": "middle", class: "day-text" }, t);
  });
  rect(W - 34, H - 26, 31, 25, "#f00");
  add("text", { x: W - 18, y: H - 6, "text-anchor": "middle", class: "axis-text" }, "22");

  // annotation arrows
  const arrows = add("g", { fill: "#fff", stroke: "#fff", style: "filter: drop-shadow(2px 2px 2px rgba(0,0,0,.5))" });
  add("path", { d: "M1143 232L1121 289", "stroke-width": 4 }, undefined, arrows);
  add("path", { d: "M1113 304L1114 286L1126 291Z", "stroke-width": 1 }, undefined, arrows);
  add("path", { d: "M986 634L1028 587", "stroke-width": 4 }, undefined, arrows);
  add("path", { d: "M1039 574L1022 583L1033 593Z", "stroke-width": 1 }, undefined, arrows);
}

// the inputs list is ruled down to its last visible line
const rows = document.getElementById("inputRows");
for (let n = rows.rows.length; n < 22; n++) {
  const tr = rows.insertRow();
  for (let c = 0; c < 3; c++) tr.insertCell();
}

draw();
window.addEventListener("resize", draw);
```
